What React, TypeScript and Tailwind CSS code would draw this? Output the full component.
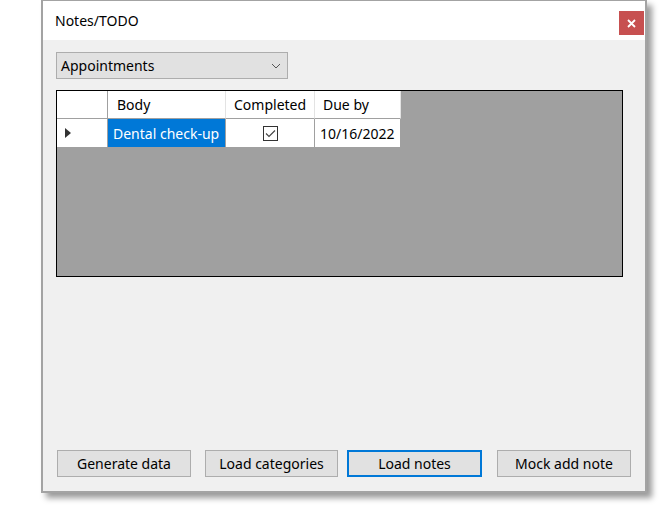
import React from "react";

const font = { fontFamily: '"Segoe UI", "Noto Sans", "Open Sans", sans-serif' };

function Button({ label, width, focused }: { label: string; width: string; focused?: boolean }) {
  return (
    <button
      className={`${width} h-[27px] flex items-center justify-center bg-[#e1e1e1] text-[14px] text-black ${
        focused ? "border-2 border-[#0078d7]" : "border border-[#adadad]"
      }`}
    >
      {label}
    </button>
  );
}

function App() {
  return (
    <div className="w-[662px] h-[507px] bg-white overflow-hidden" style={font}>
      <div className="ml-[41px] w-[606px] h-[493px] flex flex-col border-x-2 border-b-2 border-t border-[#a3a3a3] shadow-[5px_5px_6px_rgba(0,0,0,0.4)]">
        {/* title bar */}
        <div className="h-[39px] bg-white flex items-start justify-between">
          <div className="pl-[12px] pt-[10px] text-[14px] text-black leading-[20px]">Notes/TODO</div>
          <div className="mt-[10px] mr-[1px] w-[25px] h-[24px] bg-[#c75050] flex items-center justify-center">
            <svg width="9" height="9" viewBox="0 0 9 9">
              <path d="M1 1L8 8M8 1L1 8" stroke="white" strokeWidth="1.8" />
            </svg>
          </div>
        </div>

        {/* content */}
        <div className="flex-1 bg-[#f0f0f0] flex flex-col pl-[13px]">
          <div className="mt-[12px] w-[232px] h-[27px] bg-[#e1e1e1] border border-[#adadad] flex items-center justify-between pl-[4px] pr-[6px]">
            <span className="text-[14px] text-black">Appointments</span>
            <svg width="10" height="6" viewBox="0 0 10 6">
              <path d="M1 1L5 5L9 1" fill="none" stroke="#555" strokeWidth="1" />
            </svg>
          </div>

          <div className="mt-[11px] w-[567px] h-[187px] border border-black bg-[#a0a0a0] flex flex-col">
            {/* header row */}
            <div className="flex h-[28px] text-[14px] text-black">
              <div className="w-[51px] bg-white border-r border-b border-[#a0a0a0]" />
              <div className="w-[118px] bg-white border-r border-[#e3e3e3] border-b border-b-[#a0a0a0] pl-[9px] flex items-center">
                Body
              </div>
              <div className="w-[89px] bg-white border-r border-[#e3e3e3] border-b border-b-[#a0a0a0] pl-[8px] flex items-center">
                Completed
              </div>
              <div className="w-[86px] bg-white border-r border-[#e3e3e3] border-b border-b-[#a0a0a0] pl-[8px] flex items-center">
                Due by
              </div>
            </div>
            {/* data row */}
            <div className="flex h-[29px] text-[14px]">
              <div className="w-[51px] bg-white border-r border-b border-[#a0a0a0] flex items-center pl-[8px]">
                <svg width="6" height="10" viewBox="0 0 6 10">
                  <path d="M0 0L6 5L0 10Z" fill="#333" />
                </svg>
              </div>
              <div className="w-[118px] bg-[#0078d7] text-white border-r border-b border-[#a0a0a0] pl-[5px] flex items-center">
                Dental check-up
              </div>
              <div className="w-[89px] bg-white border-r border-b border-[#a0a0a0] flex items-center justify-center">
                <div className="w-[15px] h-[15px] border border-[#333] bg-white flex items-center justify-center">
                  <svg width="11" height="9" viewBox="0 0 11 9">
                    <path d="M1 4.5L4 7.5L10 1.5" fill="none" stroke="#444" strokeWidth="1.1" />
                  </svg>
                </div>
              </div>
              <div className="w-[86px] bg-white border-r border-b border-[#a0a0a0] pl-[5px] flex items-center text-black">
                10/16/2022
              </div>
            </div>
          </div>

          <div className="mt-auto mb-[14px] flex pl-[1px]">
            <Button label="Generate data" width="w-[134px]" />
            <div className="w-[14px]" />
            <Button label="Load categories" width="w-[133px]" />
            <div className="w-[9px]" />
            <Button label="Load notes" width="w-[135px]" focused />
            <div className="w-[15px]" />
            <Button label="Mock add note" width="w-[134px]" />
          </div>
        </div>
      </div>
    </div>
  );
}

export default App;
